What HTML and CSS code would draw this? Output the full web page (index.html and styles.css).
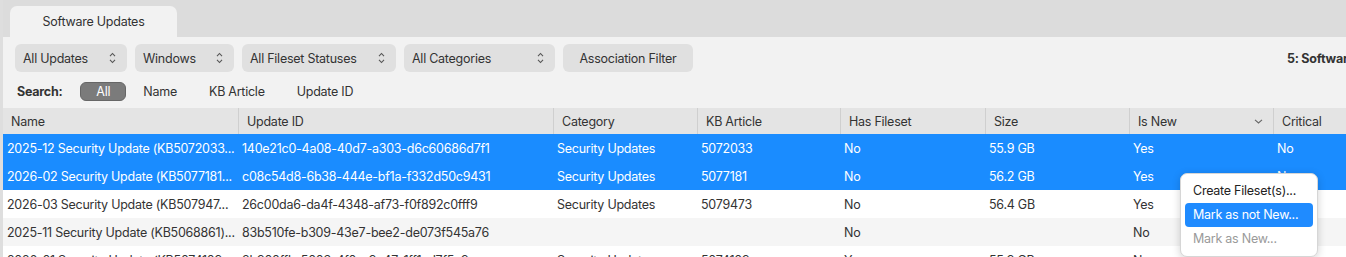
FILE: index.html
```html
<!DOCTYPE html>
<html lang="en">
<head>
    <meta charset="UTF-8">
    <title>Software Updates</title>
    <link rel="stylesheet" href="styles.css">
</head>
<body>
    <div class="window">
        <div class="tabbar">
            <div class="tab">Software Updates</div>
        </div>

        <div class="content">
            <div class="toolbar">
                <div class="select w-updates"><span>All Updates</span><svg class="updown" width="7" height="12" viewBox="0 0 7 12"><path d="M1 4.2 L3.5 1.5 L6 4.2 M1 7.8 L3.5 10.5 L6 7.8" fill="none" stroke="#555" stroke-width="1.1"/></svg></div>
                <div class="select w-os"><span>Windows</span><svg class="updown" width="7" height="12" viewBox="0 0 7 12"><path d="M1 4.2 L3.5 1.5 L6 4.2 M1 7.8 L3.5 10.5 L6 7.8" fill="none" stroke="#555" stroke-width="1.1"/></svg></div>
                <div class="select w-status"><span>All Fileset Statuses</span><svg class="updown" width="7" height="12" viewBox="0 0 7 12"><path d="M1 4.2 L3.5 1.5 L6 4.2 M1 7.8 L3.5 10.5 L6 7.8" fill="none" stroke="#555" stroke-width="1.1"/></svg></div>
                <div class="select w-cat"><span>All Categories</span><svg class="updown" width="7" height="12" viewBox="0 0 7 12"><path d="M1 4.2 L3.5 1.5 L6 4.2 M1 7.8 L3.5 10.5 L6 7.8" fill="none" stroke="#555" stroke-width="1.1"/></svg></div>
                <div class="button">Association Filter</div>
                <div class="status">5: Software Updates</div>
            </div>

            <div class="searchbar">
                <span class="search-label">Search:</span>
                <span class="opt active">All</span>
                <span class="opt">Name</span>
                <span class="opt">KB Article</span>
                <span class="opt">Update ID</span>
            </div>

            <div class="table">
                <div class="row head">
                    <div class="cell c-name">Name</div>
                    <div class="cell c-id">Update ID</div>
                    <div class="cell c-cat">Category</div>
                    <div class="cell c-kb">KB Article</div>
                    <div class="cell c-fs">Has Fileset</div>
                    <div class="cell c-size">Size</div>
                    <div class="cell c-new">Is New <svg class="sort" width="9" height="5" viewBox="0 0 9 5"><path d="M1 0.8 L4.5 4 L8 0.8" fill="none" stroke="#666" stroke-width="1.1"/></svg></div>
                    <div class="cell c-crit">Critical</div>
                </div>
                <div class="row selected">
                    <div class="cell c-name">2025-12 Security Update (KB5072033...</div>
                    <div class="cell c-id">140e21c0-4a08-40d7-a303-d6c60686d7f1</div>
                    <div class="cell c-cat">Security Updates</div>
                    <div class="cell c-kb">5072033</div>
                    <div class="cell c-fs">No</div>
                    <div class="cell c-size">55.9 GB</div>
                    <div class="cell c-new">Yes</div>
                    <div class="cell c-crit">No</div>
                </div>
                <div class="row selected">
                    <div class="cell c-name">2026-02 Security Update (KB5077181...</div>
                    <div class="cell c-id">c08c54d8-6b38-444e-bf1a-f332d50c9431</div>
                    <div class="cell c-cat">Security Updates</div>
                    <div class="cell c-kb">5077181</div>
                    <div class="cell c-fs">No</div>
                    <div class="cell c-size">56.2 GB</div>
                    <div class="cell c-new">Yes</div>
                    <div class="cell c-crit">No</div>
                </div>
                <div class="row">
                    <div class="cell c-name">2026-03 Security Update (KB507947...</div>
                    <div class="cell c-id">26c00da6-da4f-4348-af73-f0f892c0fff9</div>
                    <div class="cell c-cat">Security Updates</div>
                    <div class="cell c-kb">5079473</div>
                    <div class="cell c-fs">No</div>
                    <div class="cell c-size">56.4 GB</div>
                    <div class="cell c-new">Yes</div>
                    <div class="cell c-crit">No</div>
                </div>
                <div class="row alt">
                    <div class="cell c-name">2025-11 Security Update (KB5068861)...</div>
                    <div class="cell c-id">83b510fe-b309-43e7-bee2-de073f545a76</div>
                    <div class="cell c-cat"></div>
                    <div class="cell c-kb"></div>
                    <div class="cell c-fs">No</div>
                    <div class="cell c-size"></div>
                    <div class="cell c-new">No</div>
                    <div class="cell c-crit">No</div>
                </div>
                <div class="row">
                    <div class="cell c-name">2026-01 Security Update (KB5074109...</div>
                    <div class="cell c-id">8b900ffb-5003-4f0e-9e47-1ff1ad7f5c9e</div>
                    <div class="cell c-cat">Security Updates</div>
                    <div class="cell c-kb">5074109</div>
                    <div class="cell c-fs">Yes</div>
                    <div class="cell c-size">55.9 GB</div>
                    <div class="cell c-new">No</div>
                    <div class="cell c-crit">No</div>
                </div>
            </div>
        </div>

        <!-- context menu over the table -->
        <div class="menu">
            <div class="menu-item">Create Fileset(s)...</div>
            <div class="menu-item hover">Mark as not New...</div>
            <div class="menu-item disabled">Mark as New...</div>
        </div>
    </div>
</body>
</html>
```

FILE: styles.css
```css
html, body {
    margin: 0;
    padding: 0;
    height: 100%;
    overflow: hidden;
}

body {
    font-family: 'Inter', 'Noto Sans', sans-serif;
    font-size: 12.5px;
    letter-spacing: -0.25px;
    color: #333;
    background-color: #f2f2f2;
}

.window {
    position: relative;
    height: 100%;
    border-left: 3px solid #dedede;
}

.tabbar {
    height: 37px;
    background-color: #dcdcdc;
    display: flex;
    align-items: flex-end;
    padding-left: 7px;
}

.tab {
    width: 167px;
    height: 31px;
    background-color: #f2f2f2;
    border-radius: 7px 7px 0 0;
    display: flex;
    align-items: center;
    justify-content: center;
    color: #333;
}

.content {
    background-color: #f2f2f2;
}

.toolbar {
    display: flex;
    align-items: center;
    gap: 8px;
    padding: 7px 0 0 12px;
    height: 28px;
}

.select, .button {
    height: 28px;
    background-color: #e0e0e0;
    border-radius: 6px;
    display: flex;
    align-items: center;
    box-sizing: border-box;
    color: #333;
}

.select {
    justify-content: space-between;
    padding: 0 11px 0 8px;
}

.updown {
    display: block;
}

.w-updates { width: 112px; }
.w-os { width: 99px; }
.w-status { width: 154px; }
.w-cat { width: 151px; }

.button {
    width: 130px;
    justify-content: center;
}

.status {
    margin-left: auto;
    width: 59px;
    white-space: nowrap;
    overflow: hidden;
    font-weight: bold;
    color: #333;
}

.searchbar {
    display: flex;
    align-items: center;
    gap: 2px;
    padding: 10px 0 0 14px;
    height: 19px;
}

.search-label {
    font-weight: bold;
    margin-right: 16px;
}

.opt {
    padding: 0 15px;
    height: 19px;
    line-height: 19px;
    border-radius: 6px;
    box-sizing: border-box;
}

.opt.active {
    background-color: #7b7b7b;
    border: 1px solid #666;
    line-height: 17px;
    color: #fff;
}

.table {
    margin-top: 7px;
}

.row {
    display: flex;
    height: 28px;
    align-items: center;
    background-color: #fff;
}

.row.alt {
    background-color: #f5f5f5;
}

.row.selected {
    background-color: #1a8cff;
    color: #fff;
}

.row.head {
    height: 26px;
    background-color: #e4e4e4;
    align-items: stretch;
}

.cell {
    box-sizing: border-box;
    padding-left: 4px;
    white-space: nowrap;
    overflow: hidden;
    flex-shrink: 0;
}

.head .cell {
    padding-left: 8px;
    border-left: 1px solid #cfcfcf;
    display: flex;
    align-items: center;
}

.head .cell:first-child {
    border-left: none;
}

.c-name { width: 235px; }
.c-id { width: 315px; }
.c-cat { width: 144px; }
.c-kb { width: 143px; }
.c-fs { width: 145px; }
.c-size { width: 144px; }
.c-new { width: 144px; }
.c-crit { width: 80px; }

.head .c-new {
    justify-content: space-between;
    padding-right: 10px;
}

.sort {
    display: block;
}

.menu {
    position: absolute;
    left: 1177px;
    top: 173px;
    width: 138px;
    height: 84px;
    box-sizing: border-box;
    padding: 5px 4px;
    background-color: #fff;
    border: 1px solid #d6d6d6;
    border-radius: 7px;
    box-shadow: 0 2px 8px rgba(0, 0, 0, 0.18);
}

.menu-item {
    height: 24px;
    line-height: 24px;
    padding-left: 8px;
    border-radius: 4px;
    color: #222;
}

.menu-item.hover {
    background-color: #1f8bff;
    color: #fff;
}

.menu-item.disabled {
    color: #9a9a9a;
}
```
